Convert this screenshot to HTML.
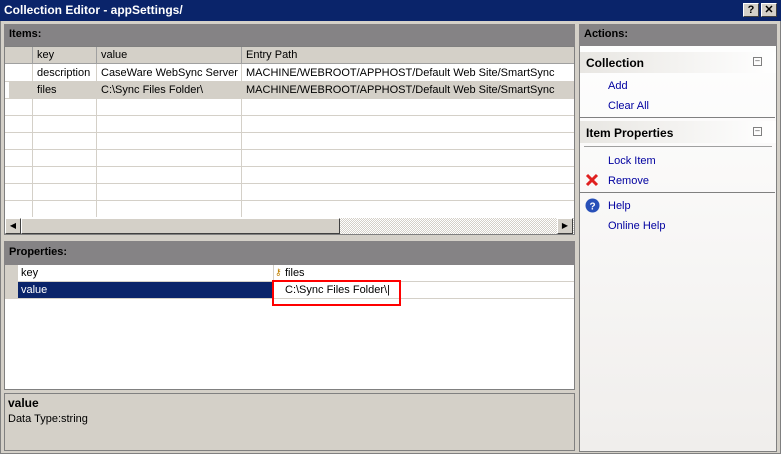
<!DOCTYPE html>
<html><head><style>
*{margin:0;padding:0;box-sizing:border-box}
body{width:781px;height:454px;background:#d4d0c8;font-family:"Liberation Sans",Tahoma,sans-serif;font-size:11px;position:relative;overflow:hidden}
.a{position:absolute}
.t{white-space:nowrap}
.hd{background:#858385;font-weight:bold;color:#000;font-size:11px;padding:4px 0 0 5px}
.vl{position:absolute;width:1px;background:#d4d0c8}
.hl{position:absolute;height:1px;background:#d4d0c8}
.lk{position:absolute;color:#0000a0;white-space:nowrap}
</style></head><body>
<div class="a" style="left:0;top:0;width:781px;height:454px;border:1px solid #808080"></div>
<div class="a" style="left:0;top:0;width:781px;height:21px;background:#0a246a"></div>
<div class="a t" style="left:4px;top:3px;color:#fff;font-weight:bold;font-size:12px">Collection Editor - appSettings/</div>
<div class="a" style="left:743px;top:3px;width:16px;height:14px;background:#d4d0c8;border:1px solid;border-color:#fff #404040 #404040 #fff;font-weight:bold;font-size:11px;text-align:center;line-height:12px">?</div>
<div class="a" style="left:761px;top:3px;width:16px;height:14px;background:#d4d0c8;border:1px solid;border-color:#fff #404040 #404040 #fff;font-weight:bold;font-size:11px;text-align:center;line-height:12px">✕</div>

<!-- Items -->
<div class="a hd" style="left:4px;top:24px;width:571px;height:22px">Items:</div>
<div class="a" style="left:4px;top:46px;width:571px;height:189px;background:#fff;border:1px solid #808080"></div>
<div class="a" style="left:5px;top:47px;width:569px;height:17px;background:#d4d0c8"></div>
<div class="a" style="left:32px;top:47px;width:1px;height:17px;background:#a0a0a0"></div>
<div class="a" style="left:96px;top:47px;width:1px;height:17px;background:#a0a0a0"></div>
<div class="a" style="left:241px;top:47px;width:1px;height:17px;background:#a0a0a0"></div>
<div class="a" style="left:5px;top:63px;width:569px;height:1px;background:#a0a0a0"></div>
<div class="a t" style="left:37px;top:49px">key</div>
<div class="a t" style="left:101px;top:49px">value</div>
<div class="a t" style="left:246px;top:49px">Entry Path</div>
<div class="a" style="left:9px;top:81px;width:565px;height:17px;background:#d4d0c8"></div>
<div class="vl" style="left:32px;top:64px;height:153px"></div>
<div class="vl" style="left:96px;top:64px;height:153px"></div>
<div class="vl" style="left:241px;top:64px;height:153px"></div>
<div class="hl" style="left:5px;top:81px;width:569px"></div>
<div class="hl" style="left:5px;top:98px;width:569px"></div>
<div class="hl" style="left:5px;top:115px;width:569px"></div>
<div class="hl" style="left:5px;top:132px;width:569px"></div>
<div class="hl" style="left:5px;top:149px;width:569px"></div>
<div class="hl" style="left:5px;top:166px;width:569px"></div>
<div class="hl" style="left:5px;top:183px;width:569px"></div>
<div class="hl" style="left:5px;top:200px;width:569px"></div>
<div class="a t" style="left:37px;top:67px">description</div>
<div class="a t" style="left:101px;top:67px">CaseWare WebSync Server</div>
<div class="a t" style="left:246px;top:67px">MACHINE/WEBROOT/APPHOST/Default Web Site/SmartSync</div>
<div class="a t" style="left:37px;top:84px">files</div>
<div class="a t" style="left:101px;top:84px">C:\Sync Files Folder\</div>
<div class="a t" style="left:246px;top:84px">MACHINE/WEBROOT/APPHOST/Default Web Site/SmartSync</div>
<div class="a" style="left:5px;top:218px;width:569px;height:16px;background:repeating-conic-gradient(#fff 0 25%,#d4d0c8 0 50%) 0 0/2px 2px"></div>
<div class="a" style="left:5px;top:218px;width:16px;height:16px;background:#d4d0c8;border:1px solid;border-color:#fff #404040 #404040 #fff;font-size:8px;text-align:center;line-height:14px">◀</div>
<div class="a" style="left:21px;top:218px;width:319px;height:16px;background:#d4d0c8;border:1px solid;border-color:#fff #404040 #404040 #fff"></div>
<div class="a" style="left:557px;top:218px;width:16px;height:16px;background:#d4d0c8;border:1px solid;border-color:#fff #404040 #404040 #fff;font-size:8px;text-align:center;line-height:14px">▶</div>

<!-- Properties -->
<div class="a hd" style="left:4px;top:241px;width:571px;height:24px;padding-top:5px">Properties:</div>
<div class="a" style="left:4px;top:265px;width:571px;height:125px;background:#fff;border:1px solid #808080;border-top:none"></div>
<div class="a" style="left:5px;top:265px;width:13px;height:34px;background:#d4d0c8"></div>
<div class="hl" style="left:18px;top:281px;width:556px"></div>
<div class="hl" style="left:5px;top:298px;width:569px"></div>
<div class="a" style="left:18px;top:282px;width:255px;height:16px;background:#0a246a"></div>
<div class="a t" style="left:21px;top:267px">key</div>
<div class="a t" style="left:21px;top:284px;color:#fff">value</div>
<div class="a" style="left:273px;top:265px;width:1px;height:33px;background:#d4d0c8"></div>
<div class="a t" style="left:275px;top:267px;color:#c08000;font-size:9px">⚷</div>
<div class="a t" style="left:285px;top:267px">files</div>
<div class="a" style="left:272px;top:280px;width:129px;height:26px;border:2px solid #f00"></div>
<div class="a t" style="left:285px;top:284px">C:\Sync Files Folder\|</div>

<div class="a" style="left:4px;top:393px;width:571px;height:58px;border:1px solid #808080;background:#d4d0c8"></div>
<div class="a t" style="left:8px;top:396px;font-weight:bold;font-size:12px">value</div>
<div class="a t" style="left:8px;top:413px">Data Type:string</div>

<!-- Actions -->
<div class="a" style="left:579px;top:24px;width:198px;height:428px;background:linear-gradient(#fff,#f0eeec);border:1px solid #808080"></div>
<div class="a hd" style="left:579px;top:24px;width:198px;height:22px">Actions:</div>
<div class="a" style="left:580px;top:52px;width:196px;height:21px;background:linear-gradient(90deg,#e8e6e2,#fff)"></div>
<div class="a t" style="left:586px;top:56px;font-weight:bold;font-size:12px">Collection</div>
<div class="a" style="left:753px;top:57px;width:9px;height:9px;border:1px solid #808080;font-size:8px;line-height:5px;text-align:center;color:#404040">–</div>
<div class="lk" style="left:608px;top:80px">Add</div>
<div class="lk" style="left:608px;top:100px">Clear All</div>
<div class="a" style="left:580px;top:117px;width:195px;height:1px;background:#808080"></div>
<div class="a" style="left:580px;top:121px;width:196px;height:22px;background:linear-gradient(90deg,#e8e6e2,#fff)"></div>
<div class="a t" style="left:586px;top:126px;font-weight:bold;font-size:12px">Item Properties</div>
<div class="a" style="left:753px;top:127px;width:9px;height:9px;border:1px solid #808080;font-size:8px;line-height:5px;text-align:center;color:#404040">–</div>
<div class="a" style="left:584px;top:146px;width:188px;height:1px;background:#a0a0a0"></div>
<div class="lk" style="left:608px;top:155px">Lock Item</div>
<svg class="a" style="left:585px;top:173px" width="14" height="14"><path d="M2 2L12 12M12 2L2 12" stroke="#e02020" stroke-width="3"/></svg>
<div class="lk" style="left:608px;top:175px">Remove</div>
<div class="a" style="left:580px;top:192px;width:195px;height:1px;background:#808080"></div>
<svg class="a" style="left:585px;top:198px" width="15" height="15"><circle cx="7.5" cy="7.5" r="7" fill="#2850b8"/><text x="7.5" y="11.5" font-size="10" font-weight="bold" fill="#fff" text-anchor="middle" font-family="Liberation Sans">?</text></svg>
<div class="lk" style="left:608px;top:200px">Help</div>
<div class="lk" style="left:608px;top:220px">Online Help</div>
</body></html>
